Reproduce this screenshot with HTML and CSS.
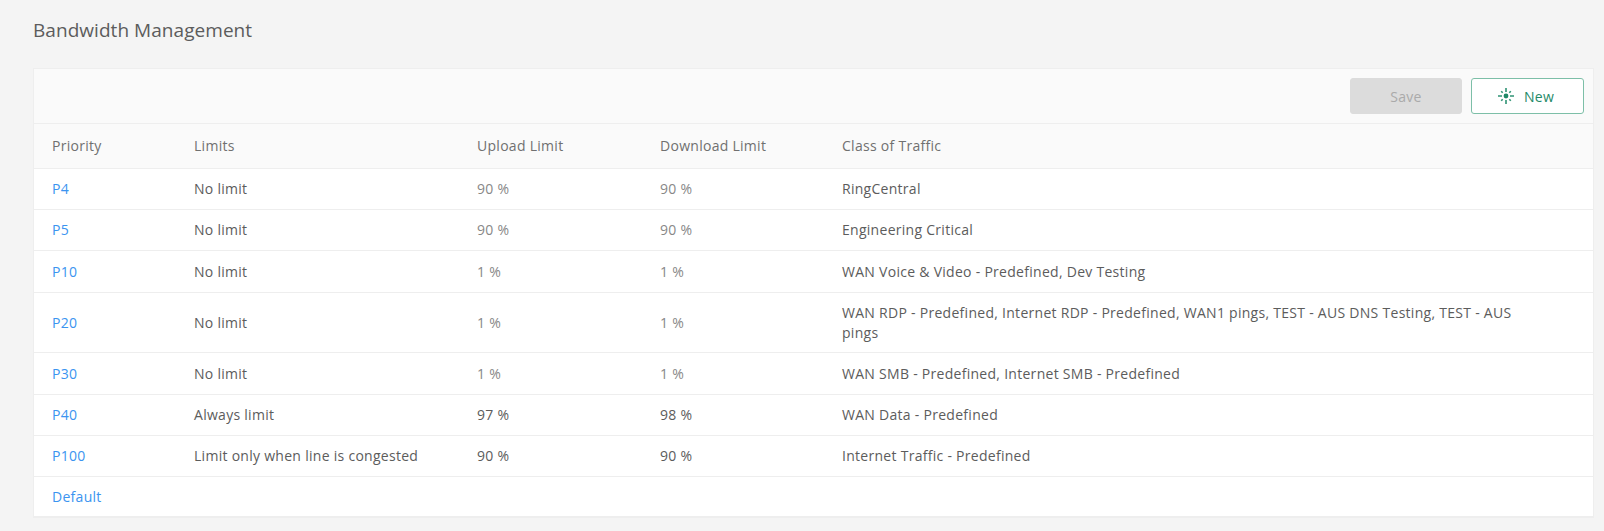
FILE: index.html
```html
<!DOCTYPE html>
<html lang="en">
<head>
<meta charset="utf-8">
<title>Bandwidth Management</title>
<link rel="stylesheet" href="styles.css">
</head>
<body>
<h1 class="title">Bandwidth Management</h1>
<section class="card">
  <div class="toolbar">
    <button class="btn btn-save" type="button">Save</button>
    <button class="btn btn-new" type="button">
      <svg class="icon" width="16" height="16" viewBox="0 0 16 16" aria-hidden="true">
        <circle cx="8" cy="8" r="2.400" fill="#1f8a68"/>
        <path class="rays" d="M8 0v4M8 12v4M0 8h4M12 8h4"/>
        <path class="rays" d="M3.200 3.200l1.500 1.500M12.800 3.200l-1.500 1.500M3.200 12.800l1.500-1.500M12.800 12.800l-1.500-1.500"/>
      </svg>
      <span>New</span>
    </button>
  </div>
  <table class="table">
    <colgroup>
      <col class="c1"><col class="c2"><col class="c3"><col class="c4"><col>
    </colgroup>
    <thead>
      <tr><th>Priority</th><th>Limits</th><th>Upload Limit</th><th>Download Limit</th><th>Class of Traffic</th></tr>
    </thead>
    <tbody>
      <tr><td><a href="#">P4</a></td><td>No limit</td><td class="muted">90 %</td><td class="muted">90 %</td><td>RingCentral</td></tr>
      <tr><td><a href="#">P5</a></td><td>No limit</td><td class="muted">90 %</td><td class="muted">90 %</td><td>Engineering Critical</td></tr>
      <tr class="tall"><td><a href="#">P10</a></td><td>No limit</td><td class="muted">1 %</td><td class="muted">1 %</td><td>WAN Voice &amp; Video - Predefined, Dev Testing</td></tr>
      <tr class="wrap"><td><a href="#">P20</a></td><td>No limit</td><td class="muted">1 %</td><td class="muted">1 %</td><td>WAN RDP - Predefined, Internet RDP - Predefined, WAN1 pings, TEST - AUS DNS Testing, TEST - AUS pings</td></tr>
      <tr class="tall"><td><a href="#">P30</a></td><td>No limit</td><td class="muted">1 %</td><td class="muted">1 %</td><td>WAN SMB - Predefined, Internet SMB - Predefined</td></tr>
      <tr><td><a href="#">P40</a></td><td>Always limit</td><td>97 %</td><td>98 %</td><td>WAN Data - Predefined</td></tr>
      <tr><td><a href="#">P100</a></td><td>Limit only when line is congested</td><td>90 %</td><td>90 %</td><td>Internet Traffic - Predefined</td></tr>
      <tr class="last"><td><a href="#">Default</a></td><td></td><td></td><td></td><td></td></tr>
    </tbody>
  </table>
</section>
</body>
</html>
```
FILE: styles.css
```css
* { box-sizing: border-box; }
html, body { margin: 0; height: 100%; }
body {
  background: #f4f4f4;
  font-family: "Open Sans", sans-serif;
  font-size: 14px;
  letter-spacing: 0.28px;
  color: #5c5c5c;
  padding: 16px 10px 0 33px;
  overflow: hidden;
}
.title {
  margin: 0 0 24px;
  font-size: 19px;
  font-weight: 400;
  line-height: 28px;
  letter-spacing: 0.05px;
  color: #5c5c5c;
}
.card {
  background: #fff;
  border: 1px solid #eee;
  border-bottom: 2px solid #eee;
}
.toolbar {
  display: flex;
  justify-content: flex-end;
  gap: 9px;
  height: 55px;
  padding: 9px 9px 0 0;
  background: #fafafa;
  border-bottom: 1px solid #eee;
}
.btn {
  height: 36px;
  font: inherit;
  letter-spacing: inherit;
  border-radius: 3px;
  padding: 0;
  display: flex;
  align-items: center;
  justify-content: center;
}
.btn-save {
  width: 112px;
  background: #dcdcdc;
  border: 1px solid #dcdcdc;
  color: #aaa;
}
.btn-new {
  width: 113px;
  padding-right: 3px;
  background: #fff;
  border: 1px solid #7dbfa8;
  color: #1f8a68;
  gap: 10px;
}
.rays {
  fill: none;
  stroke: #2f9374;
  stroke-width: 1.600;
}
.table {
  width: 100%;
  border-collapse: collapse;
  table-layout: fixed;
}
.c1 { width: 142px; }
.c2 { width: 283px; }
.c3 { width: 183px; }
.c4 { width: 182px; }
th {
  height: 44px;
  background: #fafafa;
  font-weight: 400;
  text-align: left;
  color: #707070;
  padding: 0 18px;
  border-bottom: 1px solid #eee;
}
td {
  height: 41px;
  padding: 1px 18px 0;
  line-height: 20px;
  border-bottom: 1px solid #eee;
}
td:last-child { padding-right: 60px; }
.tall td { height: 42px; }
.wrap td { height: 60px; }
.last td { height: 40px; padding-top: 2px; border-bottom: 0; }
.muted { color: #888; }
a { color: #3b94f0; text-decoration: none; }
```
